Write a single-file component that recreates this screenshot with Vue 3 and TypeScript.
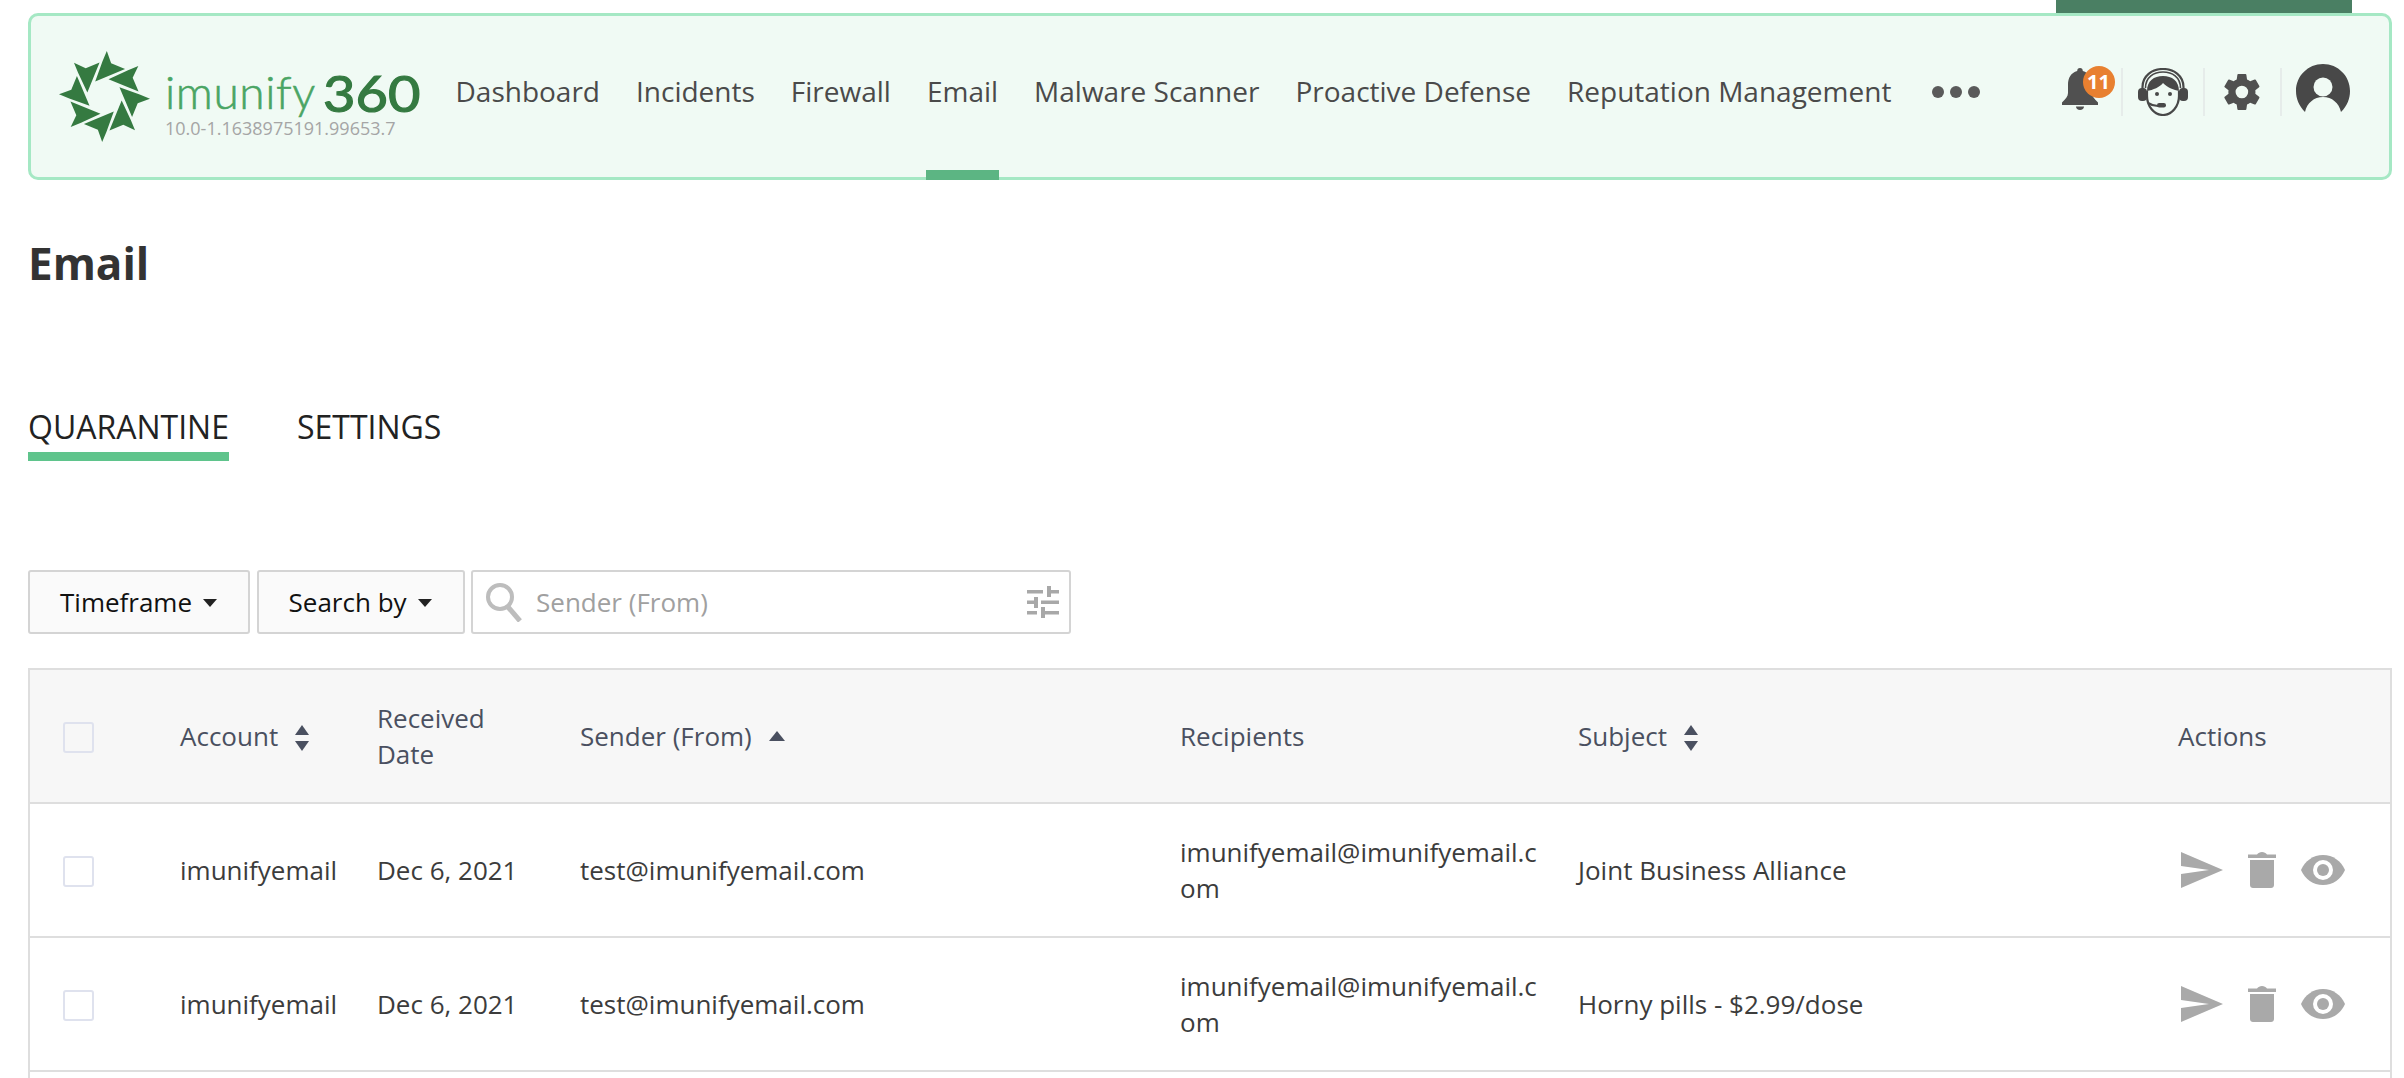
<script setup lang="ts">
const navItems = ['Dashboard', 'Incidents', 'Firewall', 'Email', 'Malware Scanner', 'Proactive Defense', 'Reputation Management']
const blades = [0, 45, 90, 135, 180, 225, 270, 315]

const rows = [
  { account: 'imunifyemail', date: 'Dec 6, 2021', sender: 'test@imunifyemail.com', recipients: 'imunifyemail@imunifyemail.com', subject: 'Joint Business Alliance' },
  { account: 'imunifyemail', date: 'Dec 6, 2021', sender: 'test@imunifyemail.com', recipients: 'imunifyemail@imunifyemail.com', subject: 'Horny pills - $2.99/dose' },
]
</script>

<template>
  <div class="page">
    <div class="top-tab"></div>
    <header class="navbar">
      <div class="brand">
        <svg class="logo-mark" viewBox="-140 -140 280 280">
          <path
            v-for="a in blades"
            :key="a"
            :transform="`rotate(${a})`"
            d="M7 -137 L20 -100 L62 -83 L-28 -45 L-6 -106 Z"
            fill="#357a41"
          />
        </svg>
        <div class="brand-text">
          <div class="wordmark"><span class="wm-light">imunify</span><span class="wm-bold">360</span></div>
          <div class="version">10.0-1.1638975191.99653.7</div>
        </div>
      </div>
      <nav class="nav">
        <a v-for="item in navItems" :key="item" class="nav-item" :class="{ active: item === 'Email' }">{{ item }}</a>
        <span class="dots"><i></i><i></i><i></i></span>
      </nav>
      <div class="nav-icons">
        <div class="ni bell">
          <svg width="36" height="42" viewBox="0 0 36 42">
            <path d="M18 0c-1.800 0-2.800 1.100-2.800 2.900C9 4.800 6 9.800 6 16.500v8.500c0 3.500-2.500 6-6 9.500V37h36v-2.500c-3.500-3.500-6-6-6-9.500v-8.500c0-6.700-3-11.700-9.200-13.600C20.800 1.100 19.800 0 18 0z" fill="#505050" />
            <path d="M14 38.500h8c0 2.200-1.700 3.500-4 3.500s-4-1.300-4-3.500z" fill="#505050" />
          </svg>
          <span class="badge">11</span>
        </div>
        <div class="ni headset">
          <svg width="50" height="48" viewBox="0 0 50 48" fill="none" stroke="#484848">
            <path d="M4.500 22V19C4.500 8 14 1 25 1s20.500 7 20.500 18v3" stroke-width="2.200" />
            <path d="M7.500 20C7.500 9 16 4 25 4s17.500 5 17.500 16" stroke-width="1.600" />
            <rect x="0" y="20" width="9" height="13" rx="4" fill="#484848" stroke="none" />
            <rect x="41" y="20" width="9" height="13" rx="4" fill="#484848" stroke="none" />
            <path d="M9 23C9 13 16 8 25 8s16 5 16 15c-5-1-11-3-16-8-3 4-10 7-16 8z" fill="#484848" stroke="none" />
            <path d="M9 23v5c0 10 7 19 16 19s16-9 16-19v-5" stroke-width="2.200" />
            <circle cx="19" cy="26" r="2" fill="#484848" stroke="none" />
            <circle cx="32" cy="26" r="2" fill="#484848" stroke="none" />
            <path d="M10 35c3 2 6 3 10 3" stroke-width="2.200" />
            <rect x="19" y="35" width="9" height="4.500" rx="2.200" fill="#484848" stroke="none" />
          </svg>
        </div>
        <div class="ni gear">
          <svg width="36" height="38" viewBox="2 2 20 20">
            <path d="M19.400 13c.04-.32.060-.66.060-1s-.020-.68-.060-1l2.110-1.650a.5.500 0 0 0 .12-.64l-2-3.460a.5.500 0 0 0-.61-.22l-2.490 1a7.300 7.300 0 0 0-1.730-1l-.38-2.650A.49.490 0 0 0 13.930 2h-4a.49.490 0 0 0-.49.420l-.38 2.650a7.700 7.700 0 0 0-1.690 1l-2.490-1a.49.490 0 0 0-.61.220l-2 3.460a.49.490 0 0 0 .12.640L4.500 11c-.04.32-.07.660-.07 1s.030.680.070 1l-2.110 1.650a.5.500 0 0 0-.12.640l2 3.460c.12.220.39.300.61.220l2.490-1c.52.400 1.080.730 1.690 1l.38 2.650c.04.240.25.420.49.420h4c.25 0 .46-.18.49-.42l.38-2.650a7.300 7.300 0 0 0 1.730-1l2.490 1c.22.080.49 0 .61-.22l2-3.460a.5.500 0 0 0-.12-.64zM11.930 15.500a3.500 3.500 0 1 1 0-7 3.500 3.500 0 0 1 0 7z" fill="#505050" />
          </svg>
        </div>
        <div class="ni avatar">
          <svg width="54" height="48" viewBox="0 0 54 48">
            <path d="M9 48C3 42 0 35 0 27 0 12 12 0 27 0s27 12 27 27c0 8-3 15-9 21-2-9-9-15-18-15S11 39 9 48z" fill="#484848" />
            <circle cx="27" cy="23" r="9.500" fill="#f0faf4" />
          </svg>
        </div>
      </div>
    </header>

    <h1 class="title">Email</h1>

    <div class="tabs">
      <div class="tab active">QUARANTINE</div>
      <div class="tab">SETTINGS</div>
    </div>

    <div class="toolbar">
      <button class="drop">Timeframe <i class="caret"></i></button>
      <button class="drop search-by">Search by <i class="caret"></i></button>
      <div class="search">
        <svg width="38" height="40" viewBox="0 0 38 40" fill="none" stroke="#bdbdbd">
          <circle cx="15" cy="15" r="12" stroke-width="4" />
          <path d="M23 25l12 14" stroke-width="5" />
        </svg>
        <span class="placeholder">Sender (From)</span>
        <svg class="sliders" width="32" height="32" viewBox="0 0 32 32" fill="#a8a8a8">
          <rect x="0" y="4" width="16" height="3.500" />
          <rect x="20" y="0" width="4" height="11" />
          <rect x="24" y="4" width="8" height="3.500" />
          <rect x="0" y="14.500" width="7" height="3.500" />
          <rect x="7" y="11" width="4" height="11" />
          <rect x="14" y="14.500" width="18" height="3.500" />
          <rect x="0" y="25" width="10" height="3.500" />
          <rect x="14" y="21" width="4" height="11" />
          <rect x="18" y="25" width="14" height="3.500" />
        </svg>
      </div>
    </div>

    <table class="grid">
      <colgroup>
        <col style="width: 151px" />
        <col style="width: 197px" />
        <col style="width: 203px" />
        <col style="width: 600px" />
        <col style="width: 398px" />
        <col style="width: 600px" />
        <col />
      </colgroup>
      <thead>
        <tr>
          <th class="check-cell"><span class="check"></span></th>
          <th>Account <svg class="sort" width="14" height="26" viewBox="0 0 14 26" fill="#4a5060"><path d="M7 0l7 10H0z" /><path d="M7 26l7-10H0z" /></svg></th>
          <th>Received<br />Date</th>
          <th>Sender (From) <svg class="sort asc" width="16" height="10" viewBox="0 0 16 10" fill="#4a5060"><path d="M8 0l8 10H0z" /></svg></th>
          <th>Recipients</th>
          <th>Subject <svg class="sort" width="14" height="26" viewBox="0 0 14 26" fill="#4a5060"><path d="M7 0l7 10H0z" /><path d="M7 26l7-10H0z" /></svg></th>
          <th>Actions</th>
        </tr>
      </thead>
      <tbody>
        <tr v-for="(row, i) in rows" :key="i">
          <td class="check-cell"><span class="check"></span></td>
          <td>{{ row.account }}</td>
          <td>{{ row.date }}</td>
          <td>{{ row.sender }}</td>
          <td class="wrap">{{ row.recipients }}</td>
          <td>{{ row.subject }}</td>
          <td>
            <div class="actions">
              <svg width="42" height="36" viewBox="0 0 42 36" fill="#a9a9a9"><path d="M0 0l42 18L0 36V22l28-4L0 14z" /></svg>
              <svg width="28" height="36" viewBox="0 0 28 36" fill="#a9a9a9">
                <path d="M0 2.500h9C10 1 12 0 14 0s4 1 5 2.500h9V6H0z" />
                <path d="M2 8h24v25c0 1.700-1.300 3-3 3H5c-1.700 0-3-1.300-3-3z" />
              </svg>
              <svg width="44" height="30" viewBox="0 0 44 30">
                <path d="M0 15C4 6 12 0 22 0s18 6 22 15c-4 9-12 15-22 15S4 24 0 15z" fill="#a9a9a9" />
                <circle cx="22" cy="15" r="10" fill="#fff" />
                <circle cx="22" cy="15" r="6" fill="#a9a9a9" />
              </svg>
            </div>
          </td>
        </tr>
        <tr><td colspan="7"></td></tr>
      </tbody>
    </table>
  </div>
</template>

<style>
html,
body {
  margin: 0;
  background: #fff;
  overflow: hidden;
}
</style>

<style scoped>
.page {
  position: relative;
  height: 1078px;
  overflow: hidden;
  padding: 13px 12px 0 28px;
  box-sizing: border-box;
  font-family: 'Open Sans', sans-serif;
  color: #333;
}

.top-tab {
  position: absolute;
  top: 0;
  left: 2056px;
  width: 296px;
  height: 14px;
  background: #4a7f63;
}

.navbar {
  position: relative;
  display: flex;
  align-items: center;
  height: 167px;
  box-sizing: border-box;
  padding: 0 0 0 27px;
  background: #f0faf4;
  border: 3px solid #a5e8c4;
  border-radius: 10px;
}

.brand {
  display: flex;
  align-items: center;
  width: 397.500px;
  flex: none;
}

.logo-mark {
  width: 93px;
  height: 93px;
  margin-right: 14px;
  flex: none;
}

.brand-text {
  margin-top: 13px;
}

.wordmark {
  font-family: Lato, sans-serif;
  line-height: 40px;
  height: 40px;
  margin-bottom: 9px;
  white-space: nowrap;
}

.wm-light {
  font-size: 46px;
  font-weight: 300;
  color: #4aa564;
  letter-spacing: 0.6px;
  -webkit-text-stroke: 0.6px #4aa564;
}

.wm-bold {
  display: inline-block;
  margin-left: 7px;
  font-size: 50px;
  font-weight: 400;
  color: #357a41;
  -webkit-text-stroke: 1.200px #357a41;
  transform: translateY(3px) scaleX(1.120);
  transform-origin: left center;
}

.version {
  font-size: 18px;
  line-height: 18px;
  color: #a5a5a5;
}

.nav {
  display: flex;
  align-items: center;
  gap: 36px;
  height: 100%;
}

.nav-item {
  position: relative;
  display: flex;
  align-items: center;
  height: 100%;
  font-size: 28px;
  color: #4a4a4a;
  padding-bottom: 12px;
  box-sizing: border-box;
  white-space: nowrap;
}

.nav-item.active::after {
  content: '';
  position: absolute;
  left: -1px;
  right: -1px;
  bottom: -3px;
  height: 10px;
  background: #5cb583;
}

.dots {
  display: flex;
  gap: 6px;
  margin-left: 5px;
  padding-bottom: 9px;
}

.dots i {
  width: 12px;
  height: 12px;
  border-radius: 50%;
  background: #5a5a5a;
}

.nav-icons {
  display: flex;
  align-items: center;
  margin-left: auto;
  padding-right: 25.500px;
  padding-bottom: 9px;
}

.ni {
  position: relative;
  display: flex;
  align-items: center;
  justify-content: center;
  height: 48px;
  box-sizing: border-box;
}

.ni + .ni {
  border-left: 2px solid #e6ecea;
}

.bell {
  width: 85px;
}

.bell svg {
  margin-left: 3px;
  margin-bottom: 6px;
}

.badge {
  position: absolute;
  top: -2px;
  right: 6px;
  width: 32px;
  height: 32px;
  border-radius: 50%;
  background: #e88030;
  color: #fff;
  font-size: 20px;
  font-weight: 700;
  line-height: 32px;
  text-align: center;
}

.headset {
  width: 82px;
}

.gear {
  width: 77px;
}

.avatar {
  width: 84px;
}

.avatar svg {
  margin-bottom: 8px;
}

.title {
  margin: 53px 0 0;
  font-size: 44px;
  line-height: 60px;
  font-weight: 700;
  color: #333;
}

.tabs {
  display: flex;
  gap: 68px;
  margin-top: 112.500px;
}

.tab {
  height: 46px;
  font-size: 32px;
  line-height: 42px;
  color: #222;
}

.tab.active {
  border-bottom: 9px solid #5fc48c;
  box-sizing: content-box;
}

.toolbar {
  display: flex;
  gap: 6.500px;
  margin-top: 109.500px;
}

.drop {
  display: flex;
  align-items: center;
  gap: 11px;
  height: 64px;
  padding: 0 31px 0 30px;
  box-sizing: border-box;
  background: #fafafa;
  border: 2px solid #d4d4d4;
  border-radius: 3px;
  font-family: inherit;
  font-size: 26px;
  color: #111;
}

.caret {
  width: 0;
  height: 0;
  border-left: 7.500px solid transparent;
  border-right: 7.500px solid transparent;
  border-top: 8px solid #222;
  margin-top: 2px;
}

.search {
  display: flex;
  align-items: center;
  width: 600px;
  height: 64px;
  box-sizing: border-box;
  padding: 0 10px 0 12px;
  background: #fff;
  border: 2px solid #d4d4d4;
  border-radius: 3px;
}

.placeholder {
  margin-left: 13px;
  font-size: 26px;
  color: #a0a0a0;
}

.sliders {
  margin-left: auto;
}

.grid {
  width: 2364px;
  margin-top: 34px;
  table-layout: fixed;
  border-collapse: collapse;
  font-size: 26px;
  border: 2px solid #dedede;
}

.grid th {
  height: 132px;
  padding: 0;
  background: #f7f7f7;
  border-bottom: 2px solid #dedede;
  font-weight: 400;
  line-height: 36px;
  text-align: left;
  color: #4a5060;
}

.grid td {
  height: 132px;
  padding: 0;
  border-bottom: 2px solid #dedede;
  line-height: 36px;
  color: #3c3c3c;
}

.wrap {
  word-break: break-all;
  padding-right: 38px !important;
}

.check-cell {
  padding-left: 33px !important;
}

.check {
  display: block;
  width: 31px;
  height: 31px;
  margin-top: 2px;
  box-sizing: border-box;
  background: #fff;
  border: 2px solid #dfe2ee;
  border-radius: 3px;
}

thead .check {
  background: #f7f7f7;
}

.sort {
  margin-left: 10px;
  vertical-align: -5px;
}

.sort.asc {
  margin-left: 10px;
  vertical-align: 5px;
}

.actions {
  display: flex;
  align-items: center;
  gap: 25px;
  margin-left: 3px;
}
</style>
